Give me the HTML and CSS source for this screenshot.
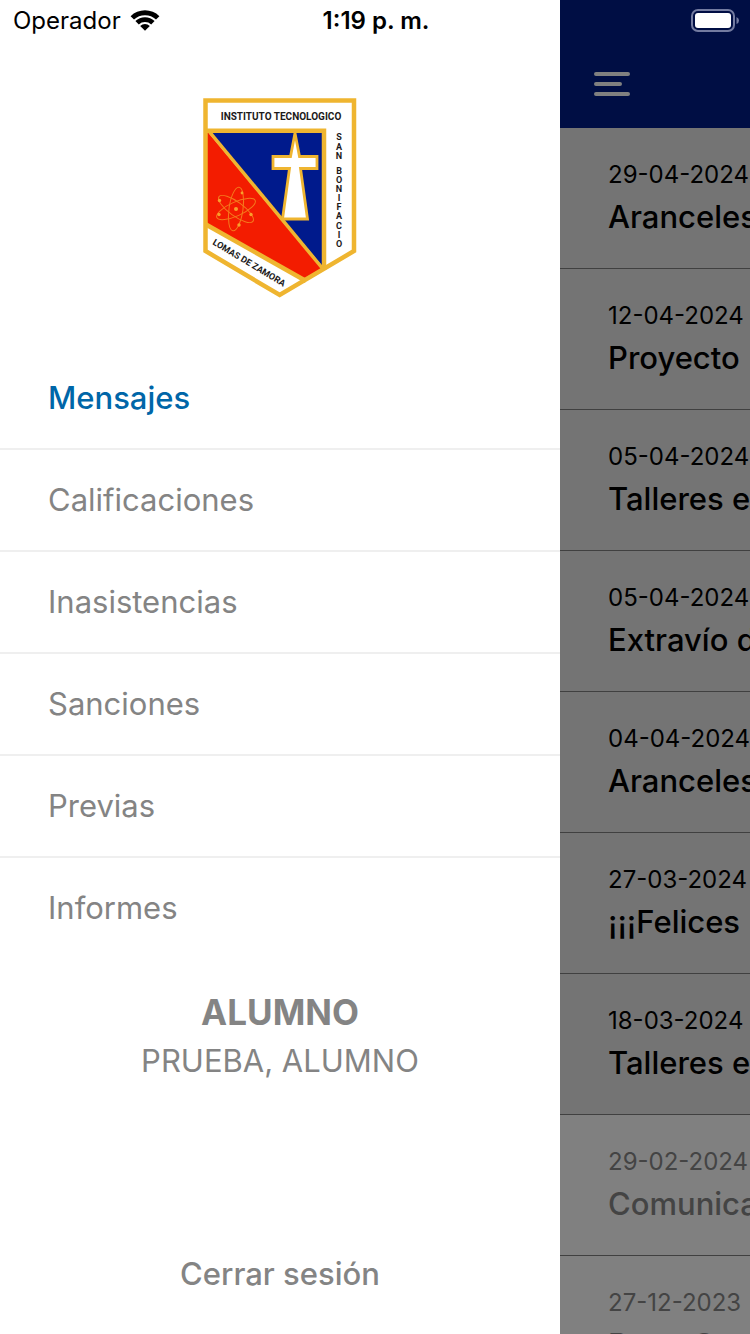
FILE: index.html
```html
<!DOCTYPE html>
<html lang="es">
<head>
<meta charset="utf-8">
<meta name="viewport" content="width=device-width, initial-scale=1">
<title>Mensajes</title>
<link rel="stylesheet" href="styles.css">
</head>
<body>
<div class="app">
  <header class="status">
    <div class="status-carrier">
      <span>Operador</span>
      <svg class="wifi" viewBox="0 0 30 22" aria-label="Wi-Fi">
        <path d="M0.6 7.2 A20.5 20.5 0 0 1 29.4 7.2 L26 10.6 A15.8 15.8 0 0 0 4 10.6 Z"/>
        <path d="M5.4 12.1 A13.8 13.8 0 0 1 24.6 12.1 L21.2 15.4 A9 9 0 0 0 8.8 15.4 Z"/>
        <path d="M10.2 16.9 A7 7 0 0 1 19.8 16.9 L15 21.7 Z"/>
      </svg>
    </div>
    <div class="status-time">1:19 p. m.</div>
    <svg class="battery" viewBox="0 0 48 23" aria-label="Batería">
      <rect x="1" y="1" width="42" height="21" rx="6" fill="none" stroke="#737ba0" stroke-width="2"/>
      <rect x="4" y="4" width="36" height="15" rx="3" fill="#fff"/>
      <path d="M45.5 8 Q48 9 48 11.5 Q48 14 45.5 15 Z" fill="#737ba0"/>
    </svg>
  </header>

  <aside class="drawer">
    <svg class="logo" viewBox="0 0 154 200" role="img" aria-label="Instituto Tecnológico San Bonifacio">
      <path d="M2.5 2.5 H151 V153 L76.7 197 L2.5 153 Z" fill="#fff"/>
      <path d="M5 33 H121 V170 Z" fill="#001a8c"/>
      <path d="M4 33 L119 171 L102 181 L4 126 Z" fill="#f31c00"/>
      <g fill="none" stroke="#efb530" stroke-width="4.5">
        <path d="M3 32.7 H121 V172"/>
        <path d="M5 32 L120 171" stroke-width="3.5"/>
        <path d="M3 126.5 L103 183"/>
        <path d="M2.5 2.5 H151 V153 L76.7 197 L2.5 153 Z"/>
      </g>
      <path d="M92 35 L96.5 58.5 H114 V70.5 H97.5 L104.500 121 H79.5 L86.5 70.5 H70 V58.5 H87.5 Z" fill="#fff" stroke="#efb530" stroke-width="2.8"/>
      <g fill="none" stroke="#f47a1c" stroke-width="1">
        <ellipse cx="33" cy="111" rx="7" ry="22" transform="rotate(8 33 111)"/>
        <ellipse cx="33" cy="111" rx="7" ry="21" transform="rotate(66 33 111)"/>
        <ellipse cx="33" cy="111" rx="7" ry="21" transform="rotate(-54 33 111)"/>
      </g>
      <g fill="#f9a02c">
        <circle cx="33" cy="111" r="2"/>
        <circle cx="36" cy="127" r="1.7"/>
        <circle cx="16" cy="116.5" r="1.7"/>
        <circle cx="16.5" cy="102.5" r="1.7"/>
        <circle cx="48" cy="116.5" r="1.7"/>
        <circle cx="39" cy="95" r="1.4"/>
      </g>
      <g class="logo-text">
        <text x="78" y="22" text-anchor="middle">INSTITUTO TECNOLOGICO</text>
        <text class="logo-town" transform="translate(9 146) rotate(31)">LOMAS DE ZAMORA</text>
        <g class="logo-side" text-anchor="middle">
          <text x="136" y="42">S</text><text x="136" y="52">A</text><text x="136" y="61">N</text>
          <text x="136" y="76">B</text><text x="136" y="85">O</text><text x="136" y="94">N</text>
          <text x="136" y="103">I</text><text x="136" y="112">F</text><text x="136" y="121">A</text>
          <text x="136" y="131">C</text><text x="136" y="140">I</text><text x="136" y="149">O</text>
        </g>
      </g>
    </svg>
    <nav class="menu">
      <a class="menu-item active" href="#">Mensajes</a>
      <a class="menu-item" href="#">Calificaciones</a>
      <a class="menu-item" href="#">Inasistencias</a>
      <a class="menu-item" href="#">Sanciones</a>
      <a class="menu-item" href="#">Previas</a>
      <a class="menu-item" href="#">Informes</a>
    </nav>
    <div class="student">
      <h2 class="student-role">ALUMNO</h2>
      <p class="student-name">PRUEBA, ALUMNO</p>
    </div>
    <button class="logout" type="button">Cerrar sesión</button>
  </aside>

  <main class="page">
    <div class="navbar">
      <button class="menu-toggle" type="button" aria-label="Menú">
        <svg class="burger" viewBox="0 0 36 24">
          <path d="M2 2 H34 M2 12 H26 M2 22 H34" stroke="#808080" stroke-width="4" stroke-linecap="round"/>
        </svg>
      </button>
    </div>
    <ul class="messages">
      <li class="message"><time class="date">29-04-2024</time><span class="title">Aranceles</span></li>
      <li class="message"><time class="date">12-04-2024</time><span class="title">Proyecto</span></li>
      <li class="message"><time class="date">05-04-2024</time><span class="title">Talleres extra</span></li>
      <li class="message"><time class="date">05-04-2024</time><span class="title">Extravío de</span></li>
      <li class="message"><time class="date">04-04-2024</time><span class="title">Aranceles</span></li>
      <li class="message"><time class="date">27-03-2024</time><span class="title">¡¡¡Felices</span></li>
      <li class="message"><time class="date">18-03-2024</time><span class="title">Talleres extra</span></li>
      <li class="message read"><time class="date">29-02-2024</time><span class="title">Comunicado</span></li>
      <li class="message read"><time class="date">27-12-2023</time><span class="title">Buen Comienzo</span></li>
    </ul>
  </main>
</div>
</body>
</html>
```
FILE: styles.css
```css
* { box-sizing: border-box; }

body {
  margin: 0;
  font-family: Inter, "Liberation Sans", sans-serif;
  color: #848484;
  background: #fff;
}

.app {
  position: relative;
  display: flex;
  height: 100vh;
  overflow: hidden;
}

.status {
  position: absolute;
  inset: 0 0 auto;
  display: grid;
  grid-template-columns: 1fr auto 1fr;
  align-items: center;
  height: 40px;
  padding: 0 11px 0 13px;
  font-size: 24px;
  color: #000;
}

.status-carrier {
  display: flex;
  align-items: center;
  gap: 9px;
}

.wifi { width: 30px; height: 22px; }
.status-time { font-weight: 600; }
.battery { width: 48px; height: 23px; justify-self: end; }

.drawer {
  flex: 0 0 560px;
  display: flex;
  flex-direction: column;
  padding: 98px 0 36px;
  background: #fff;
}

.logo {
  flex: none;
  align-self: center;
  width: 154px;
  height: 200px;
}

.logo-text {
  font: bold 10px Roboto, "Open Sans", sans-serif;
  fill: #1c1a1a;
}

.logo-side,
.logo-town { font-size: 9px; }

.menu {
  display: flex;
  flex-direction: column;
  margin-top: 50px;
}

.menu-item {
  height: 102px;
  padding: 0 48px;
  border-bottom: 2px solid #efefef;
  font-size: 31px;
  line-height: 100px;
  color: inherit;
  text-decoration: none;
}

.menu-item:last-child { border-bottom: 0; }
.active { color: #0066a8; font-weight: 500; }

.student {
  margin-top: 27px;
  text-align: center;
}

.student-role {
  margin: 0;
  font-size: 35px;
  font-weight: 700;
  line-height: 50px;
}

.student-name {
  margin: 0;
  font-size: 31px;
  line-height: 48px;
}

.logout {
  align-self: center;
  margin-top: auto;
  padding: 0;
  border: 0;
  background: none;
  font: 500 31px/48px Inter, "Liberation Sans", sans-serif;
  color: inherit;
}

.page {
  flex: 1;
  min-width: 0;
  overflow: hidden;
  background: #808080;
}

.navbar {
  display: flex;
  align-items: flex-end;
  height: 128px;
  padding: 0 34px 32px;
  background: #000e44;
}

.menu-toggle {
  display: flex;
  padding: 0;
  border: 0;
  background: none;
}

.burger { width: 36px; height: 24px; }

.messages {
  margin: 0;
  padding: 0;
  list-style: none;
}

.message {
  display: flex;
  flex-direction: column;
  height: 141px;
  padding: 27px 0 0 48px;
  border-bottom: 1px solid #404040;
  background: #747474;
  color: #000;
  white-space: nowrap;
}

.read {
  background: #808080;
  color: #444;
}

.date { font-size: 24px; line-height: 40px; }
.title { font-size: 31px; font-weight: 500; line-height: 44px; }
```
